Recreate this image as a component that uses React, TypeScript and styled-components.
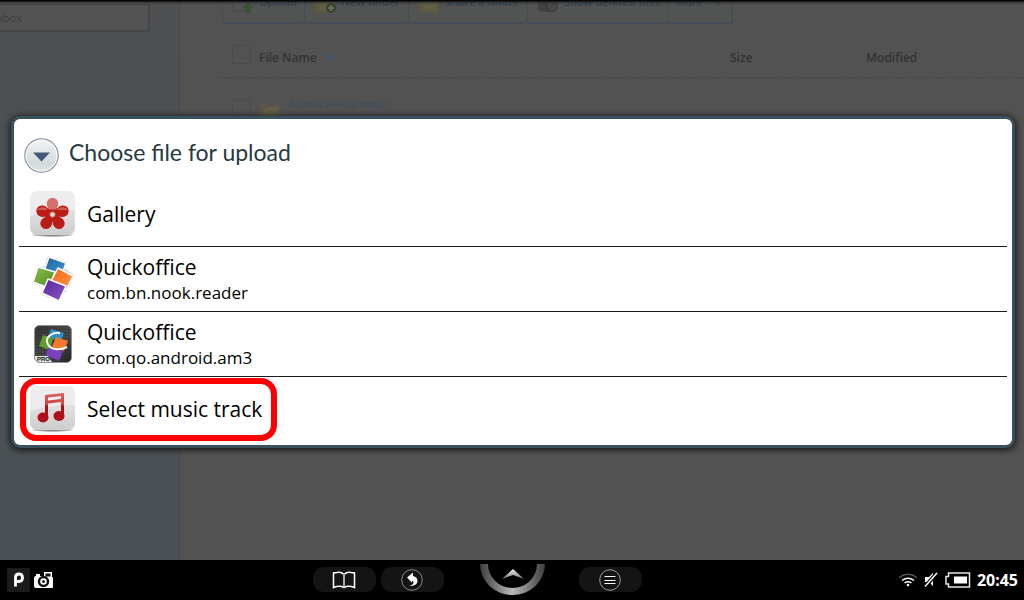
import React from "react";
import styled, { createGlobalStyle } from "styled-components";

const GlobalStyle = createGlobalStyle`
  * { box-sizing: border-box; }
  body { margin: 0; background: #000; font-family: "Open Sans", "Noto Sans", sans-serif; }
  button, input { font-family: inherit; }
`;

const Screen = styled.div`
  position: relative;
  display: grid;
  grid-template-rows: 1fr auto;
  height: 100vh;
  overflow: hidden;
`;

const Browser = styled.div`
  position: relative;
  display: grid;
  grid-template-columns: 180px 1fr;
  min-height: 0;
  overflow: hidden;
  background: #525252;
`;

const TopShade = styled.div`
  position: absolute;
  inset: 0 0 auto 0;
  height: 5px;
  background: linear-gradient(#000 0, #101010 25%, rgba(30, 30, 30, 0.4) 50%, transparent);
`;

const Sidebar = styled.aside`
  border-right: 1px solid #414b55;
  background: linear-gradient(#4e5052, #4a5054);
  padding-top: 4px;
`;

const SearchBox = styled.input`
  display: block;
  width: 150px;
  height: 28px;
  border: 1px solid #444648;
  border-width: 1px 2px 2px 0;
  background: #525252;
  padding: 0;
  text-indent: -4px;
  font-size: 11px;
  &::placeholder { color: #3f3f3f; opacity: 1; }
`;

const Main = styled.main`
  min-width: 0;
  padding-left: 39px;
`;

const Toolbar = styled.div`
  display: flex;
  margin: -20px 0 0 3px;
`;

const ToolButton = styled.button<{ $width: number }>`
  display: flex;
  align-items: center;
  gap: 5px;
  width: ${(p) => p.$width}px;
  height: 44px;
  padding: 0 0 0 9px;
  border: 1px solid #464c56;
  border-bottom-width: 2px;
  border-right-width: 0;
  border-radius: 3px;
  background: #515453;
  color: #36424f;
  font-size: 11px;
  font-weight: 600;
  white-space: nowrap;
  &:last-child { border-right-width: 2px; padding-left: 7px; }
  svg { flex: none; margin-top: 5px; }
`;

const FileTable = styled.table`
  width: 100%;
  margin-top: 10px;
  border-collapse: collapse;
  table-layout: fixed;
`;

const HeadCell = styled.th<{ $width?: number }>`
  width: ${(p) => (p.$width ? `${p.$width}px` : "auto")};
  height: 43px;
  padding: 5px 0 0;
  border-bottom: 1px dashed #474747;
  color: #333;
  font-size: 12px;
  font-weight: 600;
  text-align: left;
`;

const FileCell = styled.td`
  padding: 19px 0 0;
`;

const CellLine = styled.div<{ $gap: number }>`
  display: flex;
  align-items: center;
  gap: ${(p) => p.$gap}px;
  padding-left: 13px;
  a { margin-bottom: 16px; color: #384e64; font-size: 11px; line-height: 14px; text-decoration: none; }
`;

const Check = styled.input`
  appearance: none;
  flex: none;
  width: 19px;
  height: 19px;
  margin: 0 0 6px;
  border: 1px solid #454e57;
`;

const Overlay = styled.div`
  position: absolute;
  inset: 0;
  display: flex;
  align-items: center;
  padding: 4px 9px 0 11px;
`;

const Dialog = styled.section`
  flex: 1;
  padding: 0 5px 4px;
  border: 3px solid #3a505a;
  border-radius: 9px;
  background: #fff;
  box-shadow: 0 1px 6px 1px rgba(0, 0, 0, 0.75);
`;

const DialogHeader = styled.header`
  display: flex;
  align-items: center;
  gap: 10px;
  height: 63px;
  padding: 10px 0 0 5px;
`;

const DialogTitle = styled.h1`
  margin: 0 0 8px;
  color: #263a42;
  font-family: Lato, "Open Sans", sans-serif;
  font-size: 23px;
  line-height: 28px;
  font-weight: 400;
`;

const OptionList = styled.ul`
  margin: 0;
  padding: 0;
  list-style: none;
`;

const OptionItem = styled.li`
  position: relative;
  & + & { border-top: 1px solid #1c1c1c; }
`;

const OptionButton = styled.button`
  display: flex;
  align-items: center;
  gap: 10px;
  width: 100%;
  height: 64px;
  padding: 0 10px;
  border: 0;
  background: none;
  color: #000;
  text-align: left;
`;

const OptionText = styled.span`
  display: flex;
  flex-direction: column;
`;

const OptionName = styled.span`
  font-size: 21px;
  line-height: 28px;
`;

const OptionDetail = styled.span`
  font-size: 17px;
  line-height: 24px;
`;

const Highlight = styled.span`
  position: absolute;
  top: 1px;
  left: 1px;
  width: 257px;
  height: 63px;
  border: 6px solid #f00;
  border-radius: 16px;
  pointer-events: none;
`;

const NavBar = styled.nav`
  display: grid;
  grid-template-columns: 1fr auto 1fr;
  height: 40px;
  background: #000;
`;

const NavSide = styled.div<{ $end?: boolean }>`
  display: flex;
  align-items: center;
  justify-content: space-between;
  padding: ${(p) => (p.$end ? "0 6px 1px 34px" : "0 36px 1px 7px")};
`;

const NavGroup = styled.div<{ $gap: number }>`
  display: flex;
  align-items: center;
  gap: ${(p) => p.$gap}px;
`;

const NavButton = styled.button`
  display: grid;
  place-items: center;
  width: 63px;
  height: 25px;
  padding: 0;
  border: 0;
  border-radius: 11px;
  background: #141414;
`;

const HomeButton = styled.button`
  display: flex;
  align-items: flex-start;
  height: 40px;
  padding: 4px 0 0;
  border: 0;
  background: none;
`;

const Clock = styled.time`
  color: #fff;
  font-family: "Noto Sans", sans-serif;
  font-size: 16px;
  line-height: 24px;
  font-weight: 700;
`;

const FolderIcon = ({ plus }: { plus?: boolean }) => (
  <svg width="22" height="18" viewBox="0 0 22 18" aria-hidden="true">
    <path d="M1.500 1.500h6l2 2h11v14h-19z" fill="#5b5747" stroke="#65563f" />
    <path d="M4 7.500h4l2-2h9v10H4z" fill="#635d46" />
    <path d="M4 7.500h4l2-2h9" fill="none" stroke="#6d674f" />
    {plus && (
      <>
        <circle cx="17" cy="13" r="5" fill="#36462f" />
        <path d="M17 10v6M14 13h6" stroke="#65705f" strokeWidth="2" />
      </>
    )}
  </svg>
);

const UploadIcon = () => (
  <svg width="22" height="18" viewBox="0 0 22 18" aria-hidden="true">
    <path d="M1 1h14v15H1z" fill="#545454" stroke="#484848" />
    <path d="M16 7l6 6h-3v5h-6v-5h-3z" fill="#3b5236" />
  </svg>
);

const DeletedIcon = () => (
  <svg width="22" height="18" viewBox="0 0 22 18" aria-hidden="true">
    <path d="M1 5h15l4 3v7l-3 2H4l-3-2z" fill="#414141" />
    <circle cx="15" cy="11" r="5" fill="#4b4b4b" stroke="#3a3a3a" />
    <path d="M12 14l6-6" stroke="#393939" />
  </svg>
);

const ChooserIcon = () => (
  <svg width="35" height="35" viewBox="0 0 35 35" aria-hidden="true">
    <defs>
      <linearGradient id="knob" x1="0" y1="0" x2="0" y2="1">
        <stop offset="0" stopColor="#f3f5f5" />
        <stop offset=".75" stopColor="#d3d9da" />
        <stop offset="1" stopColor="#e2e6e7" />
      </linearGradient>
    </defs>
    <circle cx="17.5" cy="17.5" r="16.7" fill="url(#knob)" stroke="#8b93a5" strokeWidth="1.2" />
    <circle cx="17.5" cy="17.5" r="15.4" fill="none" stroke="#fff" strokeWidth="1.2" opacity=".7" />
    <path d="M9 14.500h17l-8.500 9z" fill="#435a76" />
  </svg>
);

const Tile = ({ id }: { id: string }) => (
  <>
    <defs>
      <linearGradient id={id} x1="0" y1="0" x2="0" y2="1">
        <stop offset="0" stopColor="#e2e2e2" />
        <stop offset=".5" stopColor="#dfdfdf" />
        <stop offset="1" stopColor="#cdcdcd" />
      </linearGradient>
      <radialGradient id={`${id}Shadow`}>
        <stop offset="0" stopColor="#777" />
        <stop offset=".7" stopColor="#aaa" />
        <stop offset="1" stopColor="#fff" />
      </radialGradient>
    </defs>
    <ellipse cx="23.500" cy="45" rx="22" ry="2" fill={`url(#${id}Shadow)`} />
    <rect x="1" y="1" width="45" height="44" rx="7" fill={`url(#${id})`} />
    <path d="M1 26V8q0-7 7-7h31q7 0 7 7v12Q24 19 1 26z" fill="#fff" opacity=".4" />
  </>
);

const GalleryIcon = () => (
  <svg width="48" height="48" viewBox="0 0 48 48" aria-hidden="true">
    <Tile id="tileGallery" />
    <g fill="#bb1d16">
      {[72, 144, 216, 288].map((a) => (
        <g key={a} transform={`rotate(${a} 23.5 24.5)`}>
          <circle cx="23.5" cy="13.500" r="5.700" />
          <path d="M18 15l3 9h5l3-9z" />
        </g>
      ))}
      <path d="M19 17l2.500 8h4l2.500-8z" />
      <circle cx="23.5" cy="24.500" r="4.500" />
    </g>
    <circle cx="23.5" cy="13.500" r="5.700" fill="#d6706b" />
    <path d="M18 15l1.800 4.500h7.400L29 15z" fill="#d6706b" />
    <path d="M8.500 19q5-3 9-.5l1 1.500H8.500zM29 18.500q5-2.500 9.500.5v1H28z" fill="#d25a54" />
    <circle cx="23.5" cy="24.500" r="2.600" fill="#e9dada" stroke="#b9837f" />
  </svg>
);

const MusicIcon = () => (
  <svg width="48" height="48" viewBox="0 0 48 48" aria-hidden="true">
    <Tile id="tileMusic" />
    <defs>
      <linearGradient id="note" x1="0" y1="8" x2="0" y2="37" gradientUnits="userSpaceOnUse">
        <stop offset="0" stopColor="#d8605e" />
        <stop offset=".4" stopColor="#cf4545" />
        <stop offset=".45" stopColor="#ad0d16" />
        <stop offset="1" stopColor="#b0101a" />
      </linearGradient>
    </defs>
    <path d="M16 10l19-2v24h-3V17l-13 1.500v14h-3zM19 12.500v3L32 14v-3z" fill="url(#note)" fillRule="evenodd" />
    <ellipse cx="14" cy="32.500" rx="5.500" ry="5" fill="#b0101a" />
    <ellipse cx="30" cy="31" rx="5.500" ry="5" fill="#b0101a" />
  </svg>
);

const Squares = () => (
  <>
    <defs>
      <linearGradient id="sqBlue" x1="0" y1="0" x2="1" y2="1"><stop offset="0" stopColor="#1d5f9a" /><stop offset="1" stopColor="#3fa0d8" /></linearGradient>
      <linearGradient id="sqGreen" x1="0" y1="0" x2="1" y2="1"><stop offset="0" stopColor="#8bbf4a" /><stop offset="1" stopColor="#4e8a1e" /></linearGradient>
      <linearGradient id="sqOrange" x1="0" y1="0" x2="1" y2="1"><stop offset="0" stopColor="#f0641a" /><stop offset="1" stopColor="#ff9a45" /></linearGradient>
      <linearGradient id="sqPurple" x1="0" y1="0" x2="1" y2="1"><stop offset="0" stopColor="#54249a" /><stop offset="1" stopColor="#8d58c4" /></linearGradient>
    </defs>
    <g stroke="#fff" strokeWidth="1.500" strokeLinejoin="round">
      <path d="M20 2l17 6-5 14-17-6z" fill="url(#sqBlue)" />
      <path d="M9 12l17 5-6 16-16-6z" fill="url(#sqGreen)" />
      <path d="M29 13l15 8-7 14-16-7z" fill="url(#sqOrange)" />
      <path d="M19 24l18 7-7 15-17-8z" fill="url(#sqPurple)" />
    </g>
  </>
);

const QuickofficeIcon = () => (
  <svg width="48" height="48" viewBox="0 0 48 48" aria-hidden="true">
    <path d="M19 1l19 6-2 7 9 6-8 17-3-1-4 11-18-8 3-7-12-4 6-17 6 1z" fill="#999" opacity=".5" />
    <Squares />
  </svg>
);

const QuickofficeProIcon = () => (
  <svg width="48" height="48" viewBox="0 0 48 48" aria-hidden="true">
    <defs>
      <linearGradient id="metal" x1="0" y1="0" x2="1" y2="1">
        <stop offset="0" stopColor="#333" />
        <stop offset=".6" stopColor="#4a4a4a" />
        <stop offset="1" stopColor="#222" />
      </linearGradient>
      <pattern id="mesh" width="3" height="3" patternUnits="userSpaceOnUse">
        <path d="M0 0h1v1H0z" fill="#222" />
      </pattern>
    </defs>
    <rect x="5.500" y="5.500" width="37" height="37" rx="5" fill="url(#metal)" stroke="#8d9192" />
    <rect x="7" y="7" width="34" height="34" rx="4" fill="url(#mesh)" />
    <path d="M6 36h13l4 6H11q-5 0-5-4z" fill="#dde3e5" />
    <g strokeLinejoin="round">
      <path d="M22 9l13 4-3 8-13-3z" fill="#2f8fc9" />
      <path d="M14 15l10 3-3 12-11-4z" fill="#5f9e2c" />
      <path d="M27 17l12 4-4 10-12-4z" fill="#f47a2a" />
      <path d="M19 28l15 3-4 10-13-6z" fill="#7c3fc0" />
    </g>
    <path d="M31 13c-8-1-14 4-13 9 2 8 12 9 20 5" fill="none" stroke="#fff" strokeWidth="2" />
    <text x="8" y="41" fontSize="6" fontWeight="700" fontFamily="Liberation Sans, sans-serif" fill="#111">PRO</text>
  </svg>
);

const PandoraIcon = () => (
  <svg width="23" height="24" viewBox="0 0 23 24" aria-hidden="true">
    <rect width="23" height="24" rx="1" fill="#1b1b1b" />
    <path d="M8.500 18.500V9.500Q8.500 6 12 6t3.500 3.800Q15.500 13.500 12 13.500H9" fill="none" stroke="#fff" strokeWidth="2.800" />
  </svg>
);

const CameraIcon = () => (
  <svg width="20" height="18" viewBox="0 0 20 18" aria-hidden="true">
    <path d="M2 5V3h4v2h4V1h8v16H2q-2 0-2-2V7q0-2 2-2z" fill="#fff" />
    <path d="M11.500 2.500h5v3h-5z" fill="#111" />
    <rect x="16" y="6" width="3" height="11" rx="1" fill="#fff" />
    <circle cx="9.500" cy="10.500" r="4.500" fill="#fff" stroke="#111" strokeWidth="2.500" />
    <circle cx="9.500" cy="10.500" r="1.500" fill="#111" />
  </svg>
);

const BookIcon = () => (
  <svg width="24" height="18" viewBox="0 0 24 18" fill="none" stroke="#fff" strokeWidth="1.500" aria-hidden="true">
    <path d="M12 3.500Q9 .5 5 1.500L1.500 2v14.500q6-2.500 10.500 0 4.500-2.500 10.500 0V2L19 1.500Q15 .5 12 3.500z" />
    <path d="M12 3v13" stroke="#aaa" strokeWidth="2" />
  </svg>
);

const BackIcon = () => (
  <svg width="22" height="22" viewBox="0 0 22 22" aria-hidden="true">
    <circle cx="11" cy="11" r="10.300" fill="none" stroke="#888" />
    <path d="M6 8.500L12 3.500V7q4.500 1 4.500 5.200 0 4.800-8.500 4.800 5-1.500 4.500-3.800Q12.200 12 11 11.700v2z" fill="#fff" />
  </svg>
);

const MenuIcon = () => (
  <svg width="22" height="22" viewBox="0 0 22 22" aria-hidden="true">
    <circle cx="11" cy="11" r="10.300" fill="none" stroke="#999" />
    <path d="M5.500 7.500h11M5.500 11.500h11M5.500 14.500h11" stroke="#fff" />
  </svg>
);

const HomeIcon = () => (
  <svg width="65" height="31" viewBox="0 0 65 31" aria-hidden="true">
    <defs>
      <linearGradient id="ring" x1="0" y1="0" x2="1" y2="0">
        <stop offset="0" stopColor="#3c3c3c" />
        <stop offset=".5" stopColor="#b8b8b8" />
        <stop offset="1" stopColor="#3c3c3c" />
      </linearGradient>
      <linearGradient id="arrow" x1="0" y1="0" x2="0" y2="1">
        <stop offset="0" stopColor="#eee" />
        <stop offset="1" stopColor="#777" />
      </linearGradient>
    </defs>
    <path d="M0 0a32.500 31 0 0 0 65 0h-8a24.500 24 0 0 1-49 0z" fill="url(#ring)" />
    <path d="M33 5l11 10-11-4-11 4z" fill="url(#arrow)" />
  </svg>
);

const WifiIcon = () => (
  <svg width="20" height="14" viewBox="0 0 20 14" fill="none" aria-hidden="true">
    <path d="M1 4.500q9-6.500 18 0" stroke="#555" strokeWidth="1.500" />
    <path d="M4 7.500q6-4.500 12 0M6.500 10q3.500-2.500 7 0" stroke="#fff" strokeWidth="1.500" />
    <circle cx="10" cy="12" r="1.300" fill="#fff" />
  </svg>
);

const MuteIcon = () => (
  <svg width="15" height="15" viewBox="0 0 15 15" aria-hidden="true">
    <path d="M1 5h4l4-4v13l-4-4H1z" fill="#fff" />
    <path d="M1 15L13 1" stroke="#000" strokeWidth="4" />
    <path d="M1 14.500L13 1" stroke="#fff" strokeWidth="1.500" />
  </svg>
);

const BatteryIcon = () => (
  <svg width="26" height="16" viewBox="0 0 26 16" aria-hidden="true">
    <path d="M3.500 1h21v14h-21v-3H1V4.500h2.500z" fill="none" stroke="#e8e8e8" strokeWidth="1.500" />
    <path d="M9 4.500h13v7H9z" fill="#fff" />
  </svg>
);

const options = [
  { name: "Gallery", icon: <GalleryIcon /> },
  { name: "Quickoffice", detail: "com.bn.nook.reader", icon: <QuickofficeIcon /> },
  { name: "Quickoffice", detail: "com.qo.android.am3", icon: <QuickofficeProIcon /> },
  { name: "Select music track", icon: <MusicIcon />, highlighted: true },
];

export default function App() {
  return (
    <Screen>
      <GlobalStyle />
      <Browser>
        <Sidebar>
          <SearchBox type="text" placeholder="pbox" aria-label="Search" />
        </Sidebar>
        <Main>
          <Toolbar>
            <ToolButton $width={82}><UploadIcon />Upload</ToolButton>
            <ToolButton $width={104}><FolderIcon plus />New folder</ToolButton>
            <ToolButton $width={119}><FolderIcon />Share a folder</ToolButton>
            <ToolButton $width={140}><DeletedIcon />Show deleted files</ToolButton>
            <ToolButton $width={66}>
              More
              <svg width="22" height="8" viewBox="0 0 22 8" aria-hidden="true">
                <path d="M6 0h8l-4 6z" fill="#414d58" />
              </svg>
            </ToolButton>
          </Toolbar>
          <FileTable>
            <thead>
              <tr>
                <HeadCell $width={511}>
                  <CellLine $gap={8}>
                    <Check type="checkbox" aria-label="Select all files" />
                    File Name
                    <svg width="10" height="12" viewBox="0 0 10 12" aria-hidden="true">
                      <path d="M5 0l5 7H0z" fill="#42586a" />
                    </svg>
                  </CellLine>
                </HeadCell>
                <HeadCell $width={136}>Size</HeadCell>
                <HeadCell>Modified</HeadCell>
              </tr>
            </thead>
            <tbody>
              <tr>
                <FileCell>
                  <CellLine $gap={8}>
                    <Check type="checkbox" aria-label="Select AtomicWebBrowser" />
                    <FolderIcon />
                    <a href="#atomic">AtomicWebBrowser</a>
                  </CellLine>
                </FileCell>
                <FileCell />
                <FileCell />
              </tr>
            </tbody>
          </FileTable>
        </Main>
        <TopShade />
        <Overlay>
          <Dialog role="dialog" aria-labelledby="chooser-title">
            <DialogHeader>
              <ChooserIcon />
              <DialogTitle id="chooser-title">Choose file for upload</DialogTitle>
            </DialogHeader>
            <OptionList>
              {options.map((o) => (
                <OptionItem key={o.detail ?? o.name}>
                  <OptionButton type="button">
                    {o.icon}
                    <OptionText>
                      <OptionName>{o.name}</OptionName>
                      {o.detail && <OptionDetail>{o.detail}</OptionDetail>}
                    </OptionText>
                  </OptionButton>
                  {o.highlighted && <Highlight />}
                </OptionItem>
              ))}
            </OptionList>
          </Dialog>
        </Overlay>
      </Browser>
      <NavBar>
        <NavSide>
          <NavGroup $gap={4}>
            <PandoraIcon />
            <CameraIcon />
          </NavGroup>
          <NavGroup $gap={5}>
            <NavButton aria-label="Library"><BookIcon /></NavButton>
            <NavButton aria-label="Back"><BackIcon /></NavButton>
          </NavGroup>
        </NavSide>
        <HomeButton aria-label="Home"><HomeIcon /></HomeButton>
        <NavSide $end>
          <NavButton aria-label="Menu"><MenuIcon /></NavButton>
          <NavGroup $gap={6}>
            <WifiIcon />
            <MuteIcon />
            <BatteryIcon />
            <Clock>20:45</Clock>
          </NavGroup>
        </NavSide>
      </NavBar>
    </Screen>
  );
}
